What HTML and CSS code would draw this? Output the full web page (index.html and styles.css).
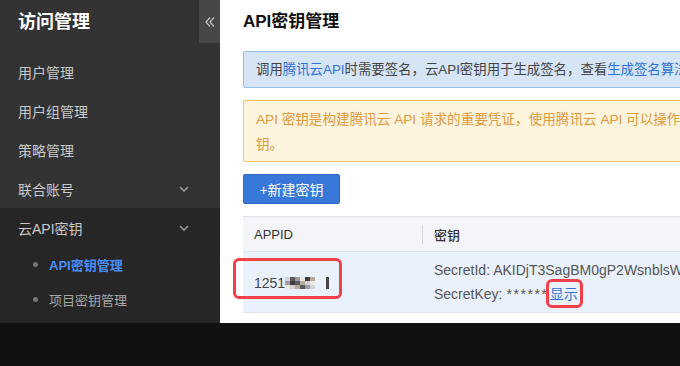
FILE: index.html
```html
<!DOCTYPE html>
<html lang="zh-CN">
<head>
    <meta charset="UTF-8">
    <title>API密钥管理</title>
    <link rel="stylesheet" href="styles.css">
</head>
<body>
    <div class="app">
        <!-- 侧边栏 -->
        <aside class="sidebar">
            <div class="side-head">
                <h1>访问管理</h1>
                <span class="collapse">
                    <svg width="12" height="12" viewBox="0 0 12 12"><polyline points="6,1.5 2,6 6,10.5" fill="none" stroke="#c4c4c4" stroke-width="1.2"/><polyline points="10,1.5 6,6 10,10.5" fill="none" stroke="#c4c4c4" stroke-width="1.2"/></svg>
                </span>
            </div>
            <ul class="menu">
                <li class="menu-item">用户管理</li>
                <li class="menu-item">用户组管理</li>
                <li class="menu-item">策略管理</li>
                <li class="menu-item">联合账号
                    <svg class="arrow" width="10" height="6" viewBox="0 0 10 6"><polyline points="1,1 5,5 9,1" fill="none" stroke="#9a9a9a" stroke-width="1.6"/></svg>
                </li>
            </ul>
            <div class="menu-open">
                <div class="menu-item">云API密钥
                    <svg class="arrow" width="10" height="6" viewBox="0 0 10 6"><polyline points="1,1 5,5 9,1" fill="none" stroke="#9a9a9a" stroke-width="1.6"/></svg>
                </div>
                <div class="sub-item active"><span class="dot"></span>API密钥管理</div>
                <div class="sub-item"><span class="dot"></span>项目密钥管理</div>
            </div>
        </aside>

        <!-- 内容区 -->
        <main class="content">
            <h2>API密钥管理</h2>
            <div class="notice info">调用<a href="#">腾讯云API</a>时需要签名，云API密钥用于生成签名，查看<a href="#">生成签名算法</a>。</div>
            <div class="notice warn">API 密钥是构建腾讯云 API 请求的重要凭证，使用腾讯云 API 可以操作您名下的所有腾讯云资源，为了您的<br>钥。</div>
            <button type="button" class="btn">+新建密钥</button>

            <div class="table">
                <div class="thead">
                    <div class="col-id">APPID</div>
                    <div class="col-key"><span class="sep"></span>密钥</div>
                </div>
                <div class="trow">
                    <div class="col-id">
                        <span class="mark mark-id"></span>
                        1251<span class="mosaic">
                            <i class="m1"></i><i class="m2"></i><i class="m3"></i><i class="m4"></i><i class="m5"></i><i class="m6"></i>
                            <i class="m3"></i><i class="m5"></i><i class="m2"></i><i class="m6"></i><i class="m1"></i><i class="m4"></i>
                            <i class="m4"></i><i class="m1"></i><i class="m6"></i><i class="m2"></i><i class="m3"></i><i class="m1"></i>
                        </span><span class="bar"></span>
                    </div>
                    <div class="col-key">
                        <p>SecretId: AKIDjT3SagBM0gP2WsnblsW0xQkA9sErtRdG3</p>
                        <p>SecretKey: <span class="stars">******</span><a href="#" class="show">显示<span class="mark mark-show"></span></a></p>
                    </div>
                </div>
            </div>
        </main>
    </div>
    <div class="bottom"></div>
</body>
</html>
```

FILE: styles.css
```css
* {
    margin: 0;
    padding: 0;
    box-sizing: border-box;
}
body {
    width: 680px;
    height: 366px;
    overflow: hidden;
    background: #111;
    font-family: "Liberation Sans", "Noto Sans CJK SC", sans-serif;
}
.app {
    display: flex;
    height: 323px;
}
.sidebar {
    width: 220px;
    flex-shrink: 0;
    background: #333;
    color: #c9c9c9;
}
.side-head {
    position: relative;
    height: 52px;
    padding: 11px 0 0 18px;
}
.side-head h1 {
    font-size: 18px;
    line-height: 22px;
    color: #fff;
    font-weight: bold;
}
.collapse {
    position: absolute;
    top: 0;
    right: 0;
    width: 21px;
    height: 43px;
    background: #464646;
    display: flex;
    align-items: center;
    justify-content: center;
}
.menu {
    list-style: none;
}
.menu-item {
    height: 39px;
    display: flex;
    align-items: center;
    justify-content: space-between;
    padding: 0 31px 0 18px;
    font-size: 14px;
    color: #c9c9c9;
}
.menu-open {
    background: #262626;
    height: 115px;
}
.sub-item {
    height: 35px;
    display: flex;
    align-items: center;
    padding-left: 33px;
    font-size: 13px;
    color: #a6a6a6;
}
.sub-item.active {
    color: #4b8ef9;
    font-weight: bold;
}
.dot {
    width: 5px;
    height: 5px;
    border-radius: 50%;
    background: #767676;
    margin-right: 11px;
}
.content {
    flex: 1;
    background: #fff;
    padding-left: 23px;
    overflow: hidden;
}
.content h2 {
    font-size: 17px;
    line-height: 20px;
    margin: 12px 0 19px;
    color: #111;
}
.notice {
    width: 600px;
    border: 1px solid;
    border-radius: 2px;
    padding: 0 12px;
    white-space: nowrap;
    overflow: hidden;
}
.notice.info {
    height: 37px;
    line-height: 35px;
    font-size: 13.4px;
    background: #d5e5f6;
    border-color: #94bde8;
    color: #444;
}
.notice.info a {
    color: #2f72d3;
    text-decoration: none;
}
.notice.warn {
    margin-top: 12px;
    font-size: 13.6px;
    line-height: 25px;
    padding-top: 6px;
    padding-bottom: 4px;
    background: #fdf4dd;
    border-color: #f8c75c;
    color: #e19a3c;
}
.btn {
    display: block;
    margin-top: 12px;
    width: 97px;
    height: 30px;
    border: 1px solid #2f68c4;
    border-radius: 2px;
    background: #3778d8;
    color: #fff;
    font-size: 14px;
    font-family: inherit;
}
.table {
    margin-top: 12px;
    width: 600px;
    font-size: 13px;
}
.thead {
    display: flex;
    height: 36px;
    align-items: center;
    background: #f3f5f8;
    border-top: 1px solid #dde2ea;
    border-bottom: 1px solid #dde2ea;
    color: #333;
    font-weight: 500;
}
.col-id {
    width: 179px;
    flex-shrink: 0;
    padding-left: 11px;
}
.col-key {
    flex: 1;
    padding-left: 12px;
    position: relative;
    white-space: nowrap;
    overflow: hidden;
}
.sep {
    position: absolute;
    left: 0;
    top: -4px;
    width: 1px;
    height: 24px;
    background: #d6d9de;
}
.trow {
    display: flex;
    align-items: center;
    height: 61px;
    background: #e9f1fc;
    border-bottom: 1px solid #dde4ee;
    color: #555;
    font-size: 14px;
}
.trow .col-id {
    position: relative;
    align-self: stretch;
    display: flex;
    align-items: center;
    padding-top: 1px;
    color: #444;
}
.trow .col-key {
    overflow: visible;
}
.trow .col-key p {
    line-height: 24px;
}
.stars {
    letter-spacing: 1.6px;
}
.mosaic {
    display: inline-grid;
    grid-template-columns: repeat(6, 5px);
    grid-auto-rows: 4px;
}
.mosaic i {
    display: block;
}
.m1 { background: #d2d2d6; }
.m2 { background: #5a5a5e; }
.m3 { background: #9b9ba0; }
.m4 { background: #ece9e4; }
.m5 { background: #3c3c40; }
.m6 { background: #b6ab98; }
.bar {
    display: inline-block;
    width: 3px;
    height: 12px;
    background: #444;
    margin-left: 11px;
}
.show {
    position: relative;
    color: #2f72d3;
    text-decoration: none;
    margin-left: 1px;
}
.mark {
    position: absolute;
    border: 3px solid #f2404b;
    border-radius: 6px;
}
.mark-id {
    left: -10px;
    top: 6px;
    width: 109px;
    height: 41px;
}
.mark-show {
    left: -4px;
    top: -7px;
    width: 37px;
    height: 29px;
}
.bottom {
    height: 43px;
    background: #111;
}
```
